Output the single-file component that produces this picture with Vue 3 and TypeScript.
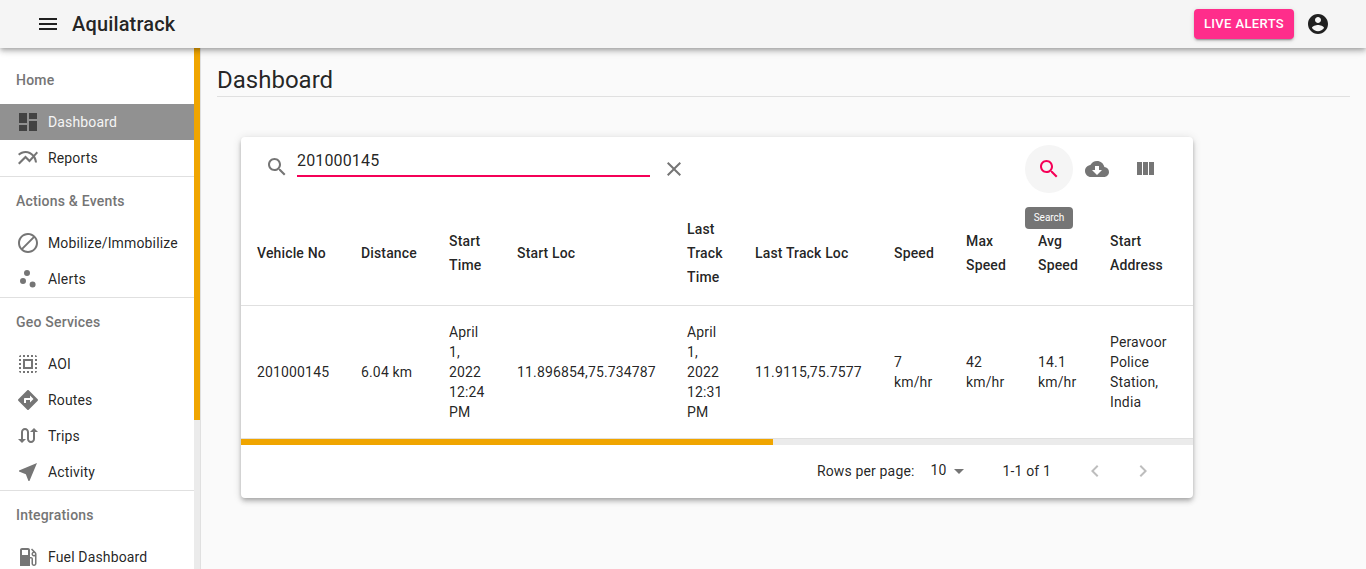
<script setup lang="ts">
const icons: Record<string, string> = {
  dashboard: 'M3 13h8V3H3v10zm0 8h8v-6H3v6zm10 0h8V11h-8v10zm0-18v6h8V3h-8z',
  chart: 'M22 6.92l-1.41-1.41-2.85 3.21C15.68 6.4 12.83 5 9.61 5 6.72 5 4.07 6.16 2 8l1.42 1.42C5.12 7.93 7.27 7 9.61 7c2.74 0 5.09 1.26 6.77 3.24l-2.88 3.24-4-4L2 16.99l1.5 1.5 6-6.01 4 4 4.05-4.55c.75 1.35 1.25 2.9 1.44 4.55H21c-.22-2.3-.95-4.39-2.04-6.14L22 6.92z',
  block: 'M12 2C6.48 2 2 6.48 2 12s4.48 10 10 10 10-4.48 10-10S17.52 2 12 2zM4 12c0-4.42 3.58-8 8-8 1.85 0 3.55.63 4.9 1.69L5.69 16.9C4.63 15.55 4 13.85 4 12zm8 8c-1.85 0-3.55-.63-4.9-1.69L18.31 7.1C19.37 8.45 20 10.15 20 12c0 4.42-3.58 8-8 8z',
  scatter: 'M4 14a3 3 0 1 0 6 0a3 3 0 1 0 -6 0zM8 6a3 3 0 1 0 6 0a3 3 0 1 0 -6 0zM13.6 17.6a3 3 0 1 0 6 0a3 3 0 1 0 -6 0z',
  select: 'M3 5h2V3c-1.1 0-2 .9-2 2zm0 8h2v-2H3v2zm4 8h2v-2H7v2zM3 9h2V7H3v2zm10-6h-2v2h2V3zm6 0v2h2c0-1.1-.9-2-2-2zM5 21v-2H3c0 1.1.9 2 2 2zm-2-4h2v-2H3v2zM9 3H7v2h2V3zm2 18h2v-2h-2v2zm8-8h2v-2h-2v2zm0 8c1.1 0 2-.9 2-2h-2v2zm0-12h2V7h-2v2zm0 8h2v-2h-2v2zm-4 4h2v-2h-2v2zm0-16h2V3h-2v2zM7 17h10V7H7v10zm2-8h6v6H9V9z',
  directions: 'M21.71 11.29l-9-9c-.39-.39-1.02-.39-1.41 0l-9 9c-.39.39-.39 1.02 0 1.41l9 9c.39.39 1.02.39 1.41 0l9-9c.39-.38.39-1.01 0-1.41zM14 14.5V12h-4v3H8v-4c0-.55.45-1 1-1h5V7.5l3.5 3.5-3.5 3.5z',
  swap: 'M18 4l-4 4h3v7c0 1.1-.9 2-2 2s-2-.9-2-2V8c0-2.21-1.79-4-4-4S5 5.79 5 8v7H2l4 4 4-4H7V8c0-1.1.9-2 2-2s2 .9 2 2v7c0 2.21 1.79 4 4 4s4-1.79 4-4V8h3l-4-4z',
  near: 'M21 3L3 10.53v.98l6.84 2.65L12.48 21h.98L21 3z',
  gas: 'M19.77 7.23l.01-.01-3.72-3.72L15 4.56l2.11 2.11c-.94.36-1.61 1.26-1.61 2.33 0 1.38 1.12 2.5 2.5 2.5.36 0 .69-.08 1-.21v7.21c0 .55-.45 1-1 1s-1-.45-1-1V14c0-1.1-.9-2-2-2h-1V5c0-1.1-.9-2-2-2H6c-1.1 0-2 .9-2 2v16h10v-7.5h1.5v5c0 1.38 1.12 2.5 2.5 2.5s2.5-1.12 2.5-2.5V9c0-.69-.28-1.32-.73-1.77zM12 10H6V5h6v5zm6 0c-.55 0-1-.45-1-1s.45-1 1-1 1 .45 1 1-.45 1-1 1z',
  menu: 'M3 18h18v-2H3v2zm0-5h18v-2H3v2zm0-7v2h18V6H3z',
  search: 'M15.5 14h-.79l-.28-.27C15.41 12.59 16 11.11 16 9.5 16 5.91 13.09 3 9.5 3S3 5.91 3 9.5 5.91 16 9.5 16c1.61 0 3.09-.59 4.23-1.57l.27.28v.79l5 4.99L20.49 19l-4.99-5zm-6 0C7.01 14 5 11.99 5 9.5S7.01 5 9.5 5 14 7.01 14 9.5 11.99 14 9.5 14z',
  clear: 'M19 6.41L17.59 5 12 10.59 6.41 5 5 6.41 10.59 12 5 17.59 6.41 19 12 13.41 17.59 19 19 17.59 13.41 12z',
  cloud: 'M19.35 10.04C18.67 6.59 15.64 4 12 4 9.11 4 6.6 5.64 5.35 8.04 2.34 8.36 0 10.91 0 14c0 3.31 2.69 6 6 6h13c2.76 0 5-2.24 5-5 0-2.64-2.05-4.78-4.65-4.96zM17 13l-5 5-5-5h3V9h4v4h3z',
  columns: 'M10 18h5V5h-5v13zm-6 0h5V5H4v13zM16 5v13h5V5h-5z',
  account: 'M12 2C6.48 2 2 6.48 2 12s4.48 10 10 10 10-4.48 10-10S17.52 2 12 2zm0 3c1.66 0 3 1.34 3 3s-1.34 3-3 3-3-1.34-3-3 1.34-3 3-3zm0 14.2c-2.5 0-4.71-1.28-6-3.22.03-1.99 4-3.08 6-3.08 1.99 0 5.97 1.09 6 3.08-1.29 1.94-3.5 3.22-6 3.22z',
  prev: 'M15.41 7.41L14 6l-6 6 6 6 1.41-1.41L10.83 12z',
  next: 'M10 6L8.59 7.41 13.17 12l-4.58 4.59L10 18l6-6z',
  drop: 'M7 10l5 5 5-5z',
}

const groups = [
  { label: 'Home', first: true, items: [
    { text: 'Dashboard', icon: 'dashboard', active: true },
    { text: 'Reports', icon: 'chart' },
  ] },
  { label: 'Actions & Events', items: [
    { text: 'Mobilize/Immobilize', icon: 'block' },
    { text: 'Alerts', icon: 'scatter' },
  ] },
  { label: 'Geo Services', items: [
    { text: 'AOI', icon: 'select' },
    { text: 'Routes', icon: 'directions' },
    { text: 'Trips', icon: 'swap' },
    { text: 'Activity', icon: 'near' },
  ] },
  { label: 'Integrations', items: [
    { text: 'Fuel Dashboard', icon: 'gas' },
  ] },
]

const columns = [
  { title: 'Vehicle No', width: 104, value: '201000145' },
  { title: 'Distance', width: 88, value: '6.04 km' },
  { title: 'Start Time', width: 68, value: 'April 1, 2022 12:24 PM' },
  { title: 'Start Loc', width: 170, value: '11.896854,75.734787' },
  { title: 'Last Track Time', width: 68, value: 'April 1, 2022 12:31 PM' },
  { title: 'Last Track Loc', width: 139, value: '11.9115,75.7577' },
  { title: 'Speed', width: 72, value: '7 km/hr' },
  { title: 'Max Speed', width: 72, value: '42 km/hr' },
  { title: 'Avg Speed', width: 72, value: '14.1 km/hr' },
  { title: 'Start Address', width: 105, value: 'Peravoor Police Station, India' },
]
</script>

<template>
  <div class="app">
    <header class="topbar">
      <button class="menu-btn" aria-label="Menu">
        <svg viewBox="0 0 24 24" class="ic dark"><path :d="icons.menu" /></svg>
      </button>
      <div class="brand">Aquilatrack</div>
      <button class="live">Live Alerts</button>
      <svg viewBox="0 0 24 24" class="ic dark account"><path :d="icons.account" /></svg>
    </header>

    <div class="body">
      <aside class="sidebar">
        <nav class="nav">
          <section v-for="g in groups" :key="g.label" class="group" :class="{ first: g.first }">
            <div class="group-label">{{ g.label }}</div>
            <a v-for="it in g.items" :key="it.text" class="item" :class="{ active: it.active }">
              <svg viewBox="0 0 24 24" class="ic"><path :d="icons[it.icon]" /></svg>
              <span>{{ it.text }}</span>
            </a>
          </section>
        </nav>
        <div class="scroll-y"><div class="thumb-y"></div></div>
      </aside>

      <main class="main">
        <h1 class="title">Dashboard</h1>
        <div class="card">
          <div class="toolbar">
            <svg viewBox="0 0 24 24" class="ic search-ic"><path :d="icons.search" /></svg>
            <div class="field">201000145</div>
            <svg viewBox="0 0 24 24" class="ic clear-ic"><path :d="icons.clear" /></svg>
            <div class="tools">
              <div class="tool on">
                <svg viewBox="0 0 24 24" class="ic pink"><path :d="icons.search" /></svg>
                <div class="tooltip">Search</div>
              </div>
              <div class="tool"><svg viewBox="0 0 24 24" class="ic"><path :d="icons.cloud" /></svg></div>
              <div class="tool"><svg viewBox="0 0 24 24" class="ic"><path :d="icons.columns" /></svg></div>
            </div>
          </div>

          <div class="table-wrap">
            <table class="table">
              <colgroup>
                <col v-for="c in columns" :key="c.title" :style="{ width: c.width + 'px' }" />
              </colgroup>
              <thead>
                <tr><th v-for="c in columns" :key="c.title">{{ c.title }}</th></tr>
              </thead>
              <tbody>
                <tr><td v-for="c in columns" :key="c.title">{{ c.value }}</td></tr>
              </tbody>
            </table>
          </div>
          <div class="scroll-x"><div class="thumb-x"></div></div>

          <div class="pager">
            <span>Rows per page:</span>
            <span class="rows">10</span>
            <svg viewBox="0 0 24 24" class="ic drop"><path :d="icons.drop" /></svg>
            <span class="range">1-1 of 1</span>
            <div class="page-btn"><svg viewBox="0 0 24 24" class="ic faded"><path :d="icons.prev" /></svg></div>
            <div class="page-btn"><svg viewBox="0 0 24 24" class="ic faded"><path :d="icons.next" /></svg></div>
          </div>
        </div>
      </main>
    </div>
  </div>
</template>

<style>
html, body { margin: 0; overflow: hidden; background: #fafafa; }
</style>

<style scoped>
.app {
  height: 100vh;
  display: flex;
  flex-direction: column;
  overflow: hidden;
  font-family: Roboto, "Liberation Sans", sans-serif;
  color: rgba(0, 0, 0, 0.87);
  font-size: 14px;
}
.ic { width: 24px; height: 24px; fill: #757575; flex: none; display: block; }
.ic.dark { fill: #212121; }
.ic.pink { fill: #f50057; }
.ic.faded { fill: rgba(0, 0, 0, 0.26); }

.topbar {
  height: 48px;
  flex: none;
  display: flex;
  align-items: center;
  padding: 0 36px 0 36px;
  background: #f5f5f5;
  box-shadow: 0 2px 4px -1px rgba(0,0,0,.2), 0 4px 5px 0 rgba(0,0,0,.14), 0 1px 10px 0 rgba(0,0,0,.12);
  position: relative;
  z-index: 2;
  box-sizing: border-box;
}
.menu-btn { border: 0; background: none; padding: 0; margin-right: 12px; }
.brand { font-size: 20px; font-weight: 500; line-height: 32px; flex: 1; letter-spacing: 0.0075em; }
.live {
  width: 100px;
  height: 30px;
  padding: 0;
  border: 0;
  border-radius: 4px;
  background: #ff2d8b;
  color: #fff;
  font: 500 13px/22px Roboto, sans-serif;
  letter-spacing: 0.02857em;
  text-transform: uppercase;
  box-shadow: 0 3px 1px -2px rgba(0,0,0,.2), 0 2px 2px 0 rgba(0,0,0,.14), 0 1px 5px 0 rgba(0,0,0,.12);
  margin-right: 12px;
}

.body { flex: 1; min-height: 0; display: flex; }
.sidebar {
  width: 201px;
  flex: none;
  display: flex;
  background: #fff;
  border-right: 1px solid #e0e0e0;
  box-sizing: border-box;
  overflow: hidden;
}
.nav { width: 194px; flex: none; }
.group { border-top: 1px solid #e0e0e0; }
.group.first { border-top: 0; padding-top: 8px; }
.group-label {
  height: 48px;
  line-height: 48px;
  padding-left: 16px;
  font-weight: 500;
  color: #757575;
  letter-spacing: 0.2px;
}
.item {
  height: 36px;
  display: flex;
  align-items: center;
  gap: 8px;
  padding-left: 16px;
  letter-spacing: 0.01071em;
  white-space: nowrap;
}
.item.active { background: #919191; color: #f5f5f5; }
.item.active .ic { fill: #424242; }
.scroll-y { width: 6px; flex: none; background: #ebebeb; }
.thumb-y { height: 372px; background: #f0a500; }

.main { flex: 1; min-width: 0; padding: 16px 16px 0; background: #fafafa; }
.title {
  margin: 0;
  height: 33px;
  box-sizing: border-box;
  font-size: 24px;
  font-weight: 400;
  line-height: 32px;
  border-bottom: 1px solid #e0e0e0;
}
.card {
  width: 952px;
  margin: 40px 0 0 24px;
  background: #fff;
  border-radius: 4px;
  box-shadow: 0 2px 4px -1px rgba(0,0,0,.2), 0 4px 5px 0 rgba(0,0,0,.14), 0 1px 10px 0 rgba(0,0,0,.12);
}
.toolbar {
  height: 64px;
  display: flex;
  align-items: flex-start;
  padding-left: 24px;
  box-sizing: border-box;
}
.search-ic { margin-top: 18px; width: 24px; height: 24px; }
.field {
  width: 353px;
  height: 33px;
  margin: 7px 0 0 8px;
  box-sizing: border-box;
  padding-top: 7px;
  font-size: 16px;
  line-height: 19px;
  letter-spacing: 0.00938em;
  border-bottom: 2px solid #f50057;
}
.clear-ic { margin: 20px 0 0 12px; }
.tools { margin-left: auto; margin-right: 24px; margin-top: 8px; display: flex; }
.tool {
  width: 48px;
  height: 48px;
  border-radius: 50%;
  display: flex;
  align-items: center;
  justify-content: center;
  position: relative;
}
.tool.on { background: #f5f5f5; }
.tooltip {
  position: absolute;
  top: 62px;
  left: 0;
  width: 48px;
  height: 22px;
  border-radius: 4px;
  background: #757575;
  color: #fff;
  font-size: 10px;
  line-height: 22px;
  text-align: center;
  z-index: 1;
}
.table-wrap { overflow: hidden; }
.table {
  width: 958px;
  table-layout: fixed;
  border-collapse: collapse;
}
th, td {
  padding: 16px 16px;
  text-align: left;
  vertical-align: middle;
  font-size: 14px;
}
th {
  font-weight: 500;
  line-height: 24px;
  letter-spacing: 0.01071em;
  border-bottom: 1px solid #e0e0e0;
}
td {
  line-height: 20px;
  letter-spacing: 0.01071em;
  border-bottom: 1px solid #e0e0e0;
}
.scroll-x { height: 6px; background: #ebebeb; }
.thumb-x { width: 532px; height: 6px; background: #f0a500; }
.pager {
  height: 53px;
  box-sizing: border-box;
  padding-bottom: 2px;
  display: flex;
  align-items: center;
  justify-content: flex-end;
  padding-right: 26px;
  letter-spacing: 0.01071em;
}
.rows { margin-left: 16px; margin-top: -2px; width: 16px; }
.drop { margin-left: 0; }
.range { margin-left: 32px; margin-right: 20px; }
.page-btn { width: 48px; height: 48px; display: flex; align-items: center; justify-content: center; }
</style>
